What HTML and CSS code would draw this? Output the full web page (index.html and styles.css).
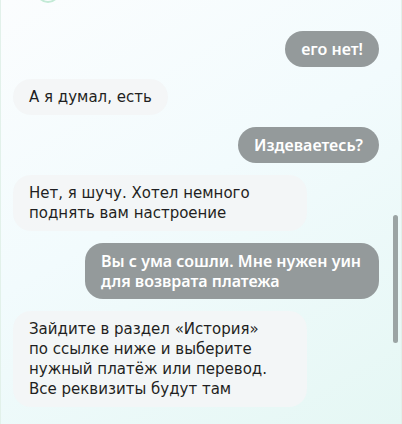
FILE: index.html
```html
<!DOCTYPE html>
<html lang="ru">
<head>
<meta charset="utf-8">
<link rel="stylesheet" href="styles.css">
</head>
<body>
<div class="chat">
  <div class="avatar"></div>
  <div class="msg out">его нет!</div>
  <div class="msg in">А я думал, есть</div>
  <div class="msg out">Издеваетесь?</div>
  <div class="msg in wide">Нет, я шучу. Хотел немного<br>поднять вам настроение</div>
  <div class="msg out wide">Вы с ума сошли. Мне нужен уин<br>для возврата платежа</div>
  <div class="msg in wide">Зайдите в раздел «История»<br>по ссылке ниже и выберите<br>нужный платёж или перевод.<br>Все реквизиты будут там</div>
  <div class="scrollbar"></div>
</div>
</body>
</html>
```
FILE: styles.css
```css
html, body {
  margin: 0;
  padding: 0;
}
body {
  font-family: "DejaVu Sans", "Noto Sans", sans-serif;
}
.chat {
  position: relative;
  box-sizing: border-box;
  width: 402px;
  height: 424px;
  overflow: hidden;
  display: flex;
  flex-direction: column;
  gap: 12px;
  padding: 0 22px 0 12px;
  border-left: 1px solid #e2f1ea;
  border-right: 1px solid #e2f1ea;
  background: linear-gradient(150deg, #fbfdfe 0%, #f2fbfd 45%, #e5f7f4 100%);
}
.avatar {
  box-sizing: border-box;
  width: 24px;
  height: 24px;
  margin-top: -21px;
  margin-left: 23px;
  margin-bottom: 16px;
  border: 2px solid #c3ead6;
  border-radius: 50%;
  flex-shrink: 0;
}
.msg {
  box-sizing: border-box;
  padding: 8px 16px;
  font-size: 15px;
  line-height: 20px;
  border-radius: 18px;
  flex-shrink: 0;
}
.in {
  align-self: flex-start;
  background: rgba(243, 245, 246, 0.92);
  color: #1f1f22;
}
.out {
  align-self: flex-end;
  background: #949a9b;
  color: #ffffff;
  font-family: "Noto Sans", "Open Sans", sans-serif;
  font-size: 16px;
  font-weight: 600;
}
.wide {
  width: 294px;
}
.scrollbar {
  position: absolute;
  left: 392px;
  top: 215px;
  width: 5px;
  height: 128px;
  border-radius: 3px;
  background: #9ba4a4;
}
```
